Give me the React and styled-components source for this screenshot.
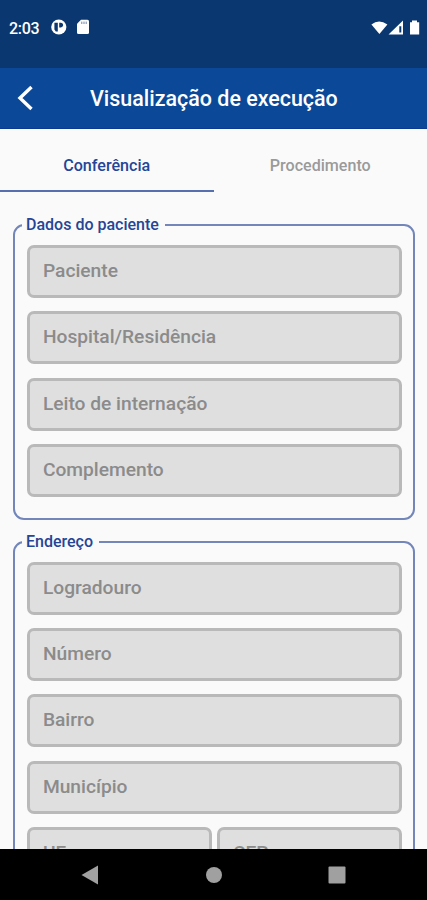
import React from 'react';
import styled, { createGlobalStyle } from 'styled-components';

const patientFields = ['Paciente', 'Hospital/Residência', 'Leito de internação', 'Complemento'];
const addressFields = ['Logradouro', 'Número', 'Bairro', 'Município'];

function StatusIcons() {
  return (
    <StatusRight>
      <svg width="50" height="16" viewBox="0 0 50 16" fill="#fff">
        <path d="M0.4 4.6Q8 -1.6 16.4 4.6L8.4 14Z" />
        <path d="M17.5 14.4L32 0.5V14.4ZM28.3 6.2V12.4H30.3V6.2Z" fillRule="evenodd" />
        <path d="M39 2.2H41V0.6H46V2.2H48.2V14.4H39Z" />
      </svg>
    </StatusRight>
  );
}

function Section({ title, fields, children }) {
  return (
    <Group>
      <GroupTitle>{title}</GroupTitle>
      <FieldList>
        {fields.map((label) => <Field key={label}>{label}</Field>)}
        {children}
      </FieldList>
    </Group>
  );
}

function App() {
  return (
    <Screen>
      <GlobalStyle />
      <StatusBar>
        <Clock>2:03</Clock>
        <svg width="40" height="18" viewBox="0 0 40 18">
          <circle cx="8.8" cy="9" r="7.6" fill="#fff" />
          <path d="M4.4 4.8H7.8V13.4H5.8L4.4 11.5ZM9.2 4.8H11Q13.2 5 13.2 7T11 9.4H9.2Z" fill="#0a376f" />
          <path d="M31 1.7H37.5Q39 1.7 39 3.2V14.4Q39 15.9 37.5 15.9H28.5Q27 15.9 27 14.4V5.7Z" fill="#fff" />
          <path d="M31.8 3.6V6M34 3.6V6M36.2 3.6V6" stroke="#6f83a9" strokeWidth="1" />
        </svg>
        <StatusIcons />
      </StatusBar>
      <Header>
        <BackButton>
          <svg width="18" height="26" viewBox="0 0 18 26" fill="none" stroke="#fff" strokeWidth="3.4">
            <path d="M15.5 2L4 13L15.5 24" />
          </svg>
        </BackButton>
        <HeaderTitle>Visualização de execução</HeaderTitle>
      </Header>
      <Tabs>
        <Tab $active>Conferência</Tab>
        <Tab>Procedimento</Tab>
      </Tabs>
      <Content>
        <Section title="Dados do paciente" fields={patientFields} />
        <Section title="Endereço" fields={addressFields}>
          <FieldRow>
            <Field>UF</Field>
            <Field>CEP</Field>
          </FieldRow>
        </Section>
      </Content>
      <NavBar>
        <NavItem>
          <svg width="18" height="20" viewBox="0 0 18 20"><path d="M0.5 10L17 0.5V19.5Z" fill="#a0a0a0" /></svg>
        </NavItem>
        <NavItem>
          <svg width="18" height="18" viewBox="0 0 18 18"><circle cx="9" cy="9" r="8" fill="#a0a0a0" /></svg>
        </NavItem>
        <NavItem>
          <svg width="18" height="18" viewBox="0 0 18 18"><rect x="0.5" y="0.5" width="17" height="17" rx="1" fill="#a0a0a0" /></svg>
        </NavItem>
      </NavBar>
    </Screen>
  );
}

const GlobalStyle = createGlobalStyle`
  * { box-sizing: border-box; }
  body {
    margin: 0;
    background: #fafafa;
    font-family: Roboto, 'Liberation Sans', sans-serif;
  }
  svg { display: block; flex: none; }
`;

const Screen = styled.div`
  display: flex;
  flex-direction: column;
  width: 427px;
  height: 900px;
  overflow: hidden;
  background: #fafafa;
`;

const StatusBar = styled.div`
  display: flex;
  flex: none;
  align-items: center;
  height: 68px;
  padding: 0 7px 14px 9px;
  background: #0a376f;
`;

const Clock = styled.div`
  width: 41px;
  padding-top: 2px;
  color: #fff;
  font-size: 16px;
  font-weight: 500;
  letter-spacing: -0.3px;
`;

const StatusRight = styled.div`
  margin-left: auto;
  margin-right: -1px;
  padding-top: 1px;
`;

const Header = styled.div`
  display: flex;
  flex: none;
  align-items: center;
  height: 61px;
  padding-left: 16px;
  background: #0b4998;
  border-bottom: 1px solid #0a3a93;
`;

const BackButton = styled.div`
  width: 74px;
`;

const HeaderTitle = styled.div`
  padding-top: 1px;
  color: #fff;
  font-size: 21.45px;
  font-weight: 500;
  white-space: nowrap;
`;

const Tabs = styled.div`
  display: flex;
  flex: none;
  height: 63px;
`;

const Tab = styled.div`
  flex: 1;
  padding-top: 27px;
  border-bottom: 2px solid ${({ $active }) => ($active ? '#566fae' : 'transparent')};
  color: ${({ $active }) => ($active ? '#254596' : '#9a9a9a')};
  font-size: 16.1px;
  font-weight: 500;
  line-height: 20px;
  text-align: center;
`;

const Content = styled.div`
  flex: 1;
  min-height: 0;
  padding: 23px 12px 0 13px;
  overflow: hidden;
`;

const Group = styled.fieldset`
  min-width: 0;
  margin: 0 0 12px;
  padding: 0 11.5px 21px;
  border: 2px solid #7286ba;
  border-radius: 11px;
`;

const GroupTitle = styled.legend`
  margin-left: -4.5px;
  padding: 0 6px 0 4px;
  color: #254596;
  font-size: 16px;
  font-weight: 500;
  line-height: 20px;
`;

const FieldList = styled.div`
  display: flex;
  flex-direction: column;
  gap: 13.3px;
  padding-top: 10px;
`;

const Field = styled.div`
  flex: 1;
  height: 53px;
  min-height: 53px;
  padding-left: 13.4px;
  border: 3px solid #b9b9b9;
  border-radius: 7px;
  background: #dfdfdf;
  color: #8b8b8b;
  font-size: 19.2px;
  font-weight: 500;
  line-height: 46px;
`;

const FieldRow = styled.div`
  display: flex;
  gap: 5px;
`;

const NavBar = styled.div`
  display: flex;
  flex: none;
  align-items: center;
  justify-content: space-between;
  height: 51px;
  padding: 0 81px;
  background: #000;
`;

const NavItem = styled.div`
  display: flex;
  justify-content: center;
`;

export default App;
